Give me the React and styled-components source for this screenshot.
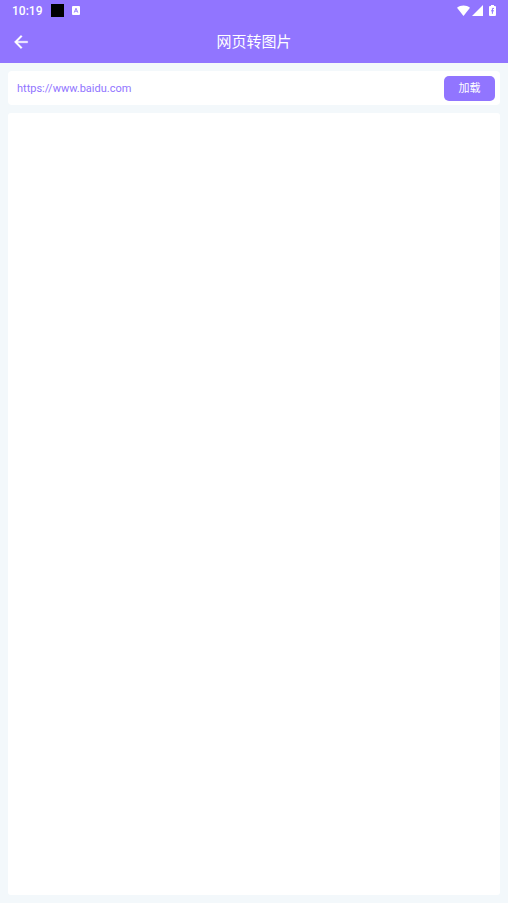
import React from "react";
import styled, { createGlobalStyle } from "styled-components";

const purple = "#9175ff";

const GlobalStyle = createGlobalStyle`
  * { box-sizing: border-box; }
  body {
    margin: 0;
    background: #f3f8fb;
    font-family: Roboto, "Noto Sans CJK SC", sans-serif;
  }
  button, input { font-family: inherit; }
`;

const Screen = styled.div`
  min-height: 100vh;
  display: flex;
  flex-direction: column;
`;

const Header = styled.header`
  background: ${purple};
  color: #fff;
`;

const StatusBar = styled.div`
  height: 21px;
  padding: 0 12px;
  display: flex;
  align-items: center;
  justify-content: space-between;
`;

const StatusGroup = styled.div`
  display: flex;
  align-items: center;
  gap: ${(p) => p.$gap}px;
`;

const Clock = styled.time`
  font-size: 12px;
  line-height: 20px;
  font-weight: 500;
`;

const AppSquare = styled.span`
  width: 13px;
  height: 13px;
  background: #000;
`;

const Icon = styled.svg`
  display: block;
  flex: none;
`;

const TitleBar = styled.div`
  height: 42px;
  padding: 0 7px;
  display: grid;
  grid-template-columns: 28px 1fr 28px;
  align-items: center;
`;

const BackButton = styled.button`
  width: 28px;
  height: 28px;
  padding: 0;
  border: 0;
  background: none;
  color: inherit;
  display: grid;
  place-items: center;
  cursor: pointer;
`;

const Title = styled.h1`
  margin: 0;
  font-size: 15px;
  line-height: 24px;
  font-weight: 400;
  text-align: center;
`;

const Content = styled.main`
  flex: 1;
  padding: 8px;
  display: flex;
  flex-direction: column;
  gap: 8px;
`;

const UrlForm = styled.form`
  height: 34px;
  padding: 0 5px 0 9px;
  display: flex;
  align-items: center;
  gap: 8px;
  background: #fff;
  border-radius: 4px;
`;

const UrlInput = styled.input`
  flex: 1;
  min-width: 0;
  padding: 2px 0 0;
  border: 0;
  outline: 0;
  background: none;
  color: ${purple};
  font-size: 11px;
  line-height: 16px;
`;

const LoadButton = styled.button`
  width: 51px;
  height: 25px;
  padding: 2px 0 0;
  border: 0;
  border-radius: 5px;
  background: ${purple};
  color: #fff;
  font-size: 11px;
  line-height: 16px;
  font-weight: 400;
  cursor: pointer;
`;

const Preview = styled.section`
  flex: 1;
  background: #fff;
  border-radius: 3px;
`;

function InputMethodIcon() {
  return (
    <Icon width="8" height="9" viewBox="0 0 8 9" aria-hidden="true">
      <rect width="8" height="9" rx="1" fill="#fff" />
      <path d="M2.2 6.6 4 2.2l1.8 4.4M2.9 5.2h2.2" fill="none" stroke={purple} strokeWidth="0.9" />
    </Icon>
  );
}

function WifiIcon() {
  return (
    <Icon width="13" height="11" viewBox="0 0 13 11" aria-hidden="true">
      <path d="M0 2.8C3.6-.4 9.4-.4 13 2.8L6.5 11Z" fill="#fff" />
    </Icon>
  );
}

function SignalIcon() {
  return (
    <Icon width="11" height="11" viewBox="0 0 11 11" aria-hidden="true">
      <path d="M11 0v11H0Z" fill="#fff" />
    </Icon>
  );
}

function BatteryIcon() {
  return (
    <Icon width="7" height="11" viewBox="0 0 7 11" aria-hidden="true">
      <path d="M2 0h3v1h1q1 0 1 1v8q0 1-1 1H1q-1 0-1-1V2q0-1 1-1h1Z" fill="#fff" />
      <path d="M5 3.4H3.4v5.4M2 5.8h3" fill="none" stroke={purple} strokeWidth="1" />
    </Icon>
  );
}

function BackIcon() {
  return (
    <Icon width="20" height="20" viewBox="0 0 24 24" aria-hidden="true">
      <path
        d="M20 11H7.83l5.59-5.59L12 4l-8 8 8 8 1.41-1.41L7.83 13H20Z"
        fill="currentColor"
        stroke="currentColor"
        strokeWidth="0.4"
      />
    </Icon>
  );
}

export default function App() {
  return (
    <Screen>
      <GlobalStyle />
      <Header>
        <StatusBar>
          <StatusGroup $gap={8}>
            <StatusGroup $gap={9}>
              <Clock>10:19</Clock>
              <AppSquare />
            </StatusGroup>
            <InputMethodIcon />
          </StatusGroup>
          <StatusGroup $gap={2}>
            <WifiIcon />
            <StatusGroup $gap={6}>
              <SignalIcon />
              <BatteryIcon />
            </StatusGroup>
          </StatusGroup>
        </StatusBar>
        <TitleBar>
          <BackButton type="button" aria-label="返回">
            <BackIcon />
          </BackButton>
          <Title>网页转图片</Title>
        </TitleBar>
      </Header>
      <Content>
        <UrlForm onSubmit={(e) => e.preventDefault()}>
          <UrlInput type="text" aria-label="网址" defaultValue="https://www.baidu.com" />
          <LoadButton type="submit">加载</LoadButton>
        </UrlForm>
        <Preview aria-label="网页预览" />
      </Content>
    </Screen>
  );
}
